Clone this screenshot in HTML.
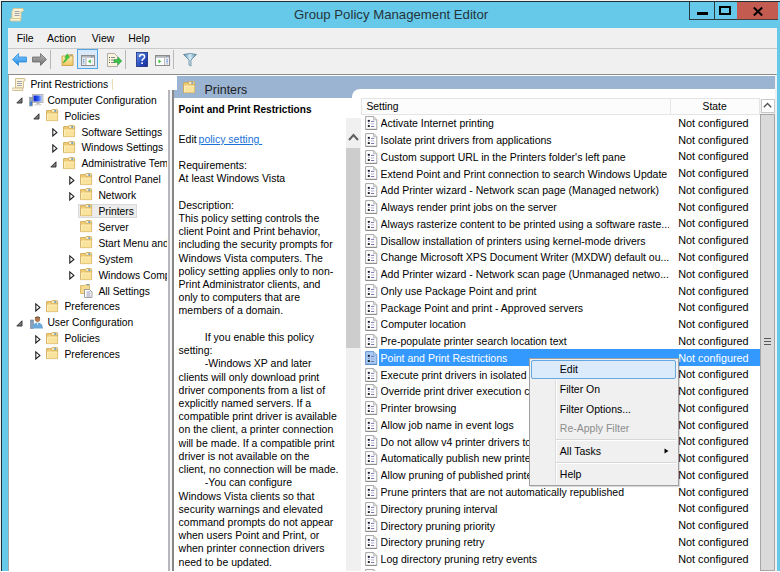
<!DOCTYPE html>
<html><head><meta charset="utf-8"><style>
html,body{margin:0;padding:0;}
body{width:780px;height:572px;position:relative;overflow:hidden;font-family:"Liberation Sans", sans-serif;}
.t{position:absolute;white-space:nowrap;font-family:"Liberation Sans", sans-serif;}
</style></head><body>
<div style="position:absolute;left:0px;top:0px;width:780px;height:572px;background:#f4efef"></div>
<div style="position:absolute;left:1px;top:1px;width:779px;height:571px;background:#66c9e9;border-left:1px solid #1f2f36;border-top:1px solid #1f2f36;box-sizing:border-box"></div>
<svg style="position:absolute;left:9px;top:7px" width="15" height="15" viewBox="0 0 15 15">
<path d="M4.5 1.5 h8.5 a1.5 1.5 0 0 1 0 3 h-1 v8 h-9 v-8z" fill="#fbf3d6" stroke="#d9c89a" stroke-width="1"/>
<path d="M1.5 11.5 h10 v2.5 h-9 a1.5 1.5 0 0 1 -1 -2.5z" fill="#fbf3d6" stroke="#d9c89a" stroke-width="1"/>
<rect x="5.5" y="4" width="5" height="1" fill="#a0a0a8"/><rect x="5.5" y="6" width="5" height="1" fill="#a0a0a8"/><rect x="5.5" y="8" width="5" height="1" fill="#a0a0a8"/>
</svg>
<div class="t" style="left:294px;top:4.27px;font-size:13.2px;line-height:21.12px;color:#25343c;">Group Policy Management Editor</div>
<div style="position:absolute;left:689px;top:2px;width:26px;height:18px;background:#66c9e9;border:1px solid #2b3a40;border-top:none;box-sizing:border-box"></div>
<div style="position:absolute;left:715px;top:2px;width:22px;height:18px;background:#66c9e9;border-bottom:1px solid #2b3a40;box-sizing:border-box"></div>
<div style="position:absolute;left:737px;top:2px;width:41px;height:18px;background:#c35b51;border-bottom:1px solid #4a4040;box-sizing:border-box"></div>
<div style="position:absolute;left:697px;top:12.2px;width:11px;height:2.5px;background:#000"></div>
<div style="position:absolute;left:719px;top:6px;width:12px;height:9px;border:2px solid #000;box-sizing:border-box"></div>
<svg style="position:absolute;left:752.5px;top:6.5px" width="10" height="9" viewBox="0 0 10 9"><path d="M0.8 0.5 L9.2 8.5 M9.2 0.5 L0.8 8.5" stroke="#000" stroke-width="2"/></svg>
<div style="position:absolute;left:8px;top:28px;width:768.5px;height:20px;background:#f0f0f0"></div>
<div style="position:absolute;left:8px;top:48px;width:768.5px;height:1px;background:#c9c9c9"></div>
<div class="t" style="left:16.7px;top:29.66px;font-size:10.5px;line-height:16.80px;color:#000;">File</div>
<div class="t" style="left:46.9px;top:29.66px;font-size:10.5px;line-height:16.80px;color:#000;">Action</div>
<div class="t" style="left:91.8px;top:29.66px;font-size:10.5px;line-height:16.80px;color:#000;">View</div>
<div class="t" style="left:128.2px;top:29.66px;font-size:10.5px;line-height:16.80px;color:#000;">Help</div>
<div style="position:absolute;left:8px;top:49px;width:768.5px;height:25px;background:#f0f0f0"></div>
<div style="position:absolute;left:8px;top:74px;width:768px;height:1px;background:#8c8c8c"></div>
<svg style="position:absolute;left:12px;top:53px" width="15" height="13" viewBox="0 0 15 13">
<defs><linearGradient id="gb" x1="0" y1="0" x2="0" y2="1"><stop offset="0" stop-color="#8fd0ff"/><stop offset="1" stop-color="#1a86e0"/></linearGradient>
<linearGradient id="gg" x1="0" y1="0" x2="0" y2="1"><stop offset="0" stop-color="#b8b8b8"/><stop offset="1" stop-color="#6e6e6e"/></linearGradient></defs>
<path d="M0.5 6.5 L6.5 0.5 V4 H14.5 V9 H6.5 V12.5z" fill="url(#gb)" stroke="#2a8ad8" stroke-width="0.8"/></svg>
<svg style="position:absolute;left:32px;top:53px" width="15" height="13" viewBox="0 0 15 13">
<path d="M14.5 6.5 L8.5 0.5 V4 H0.5 V9 H8.5 V12.5z" fill="url(#gg)" stroke="#6a6a6a" stroke-width="0.8"/></svg>
<div style="position:absolute;left:50px;top:50px;width:1px;height:19px;background:#b8b8b8"></div>
<svg style="position:absolute;left:60.5px;top:52px" width="14" height="15" viewBox="0 0 14 15">
<defs><linearGradient id="gfo" x1="0" y1="0" x2="0" y2="1"><stop offset="0" stop-color="#fdeeb8"/><stop offset="1" stop-color="#f0c65c"/></linearGradient></defs>
<path d="M8 2.5 h3.8 v2 h-3.8z" fill="#f6dc90" stroke="#d0a850" stroke-width="0.7"/>
<rect x="9.5" y="2.8" width="1.6" height="1" fill="#5a9ad8"/>
<path d="M1 4 h11 v9.5 h-11z" fill="url(#gfo)" stroke="#c9a048" stroke-width="0.9"/>
<path d="M2.2 11 C3 9 4.3 7.2 5.2 6 L3.9 5.5 L6.3 1.8 L8.5 5.8 L7.1 5.8 C6.3 7.6 4.6 9.6 2.2 11z" fill="#3ccc3c" stroke="#28a028" stroke-width="0.5"/></svg>
<div style="position:absolute;left:77px;top:49px;width:21px;height:20px;background:#d8eafa;border:1.5px solid #4ea6e6;box-sizing:border-box"></div>
<svg style="position:absolute;left:81px;top:55px" width="14" height="11" viewBox="0 0 14 11">
<rect x="0.5" y="0.5" width="13" height="10" fill="#fff" stroke="#8c8c8c"/>
<rect x="1" y="1" width="12" height="1.8" fill="#b4b8bc"/>
<rect x="10" y="1.3" width="1" height="1" fill="#7a8aa0"/><rect x="11.5" y="1.3" width="1" height="1" fill="#7a8aa0"/>
<rect x="1" y="2.8" width="3.5" height="7.2" fill="#eef2f6"/>
<rect x="1.8" y="4.3" width="1.6" height="1" fill="#4a7ac8"/><rect x="1.8" y="6.3" width="1.6" height="1" fill="#4a7ac8"/><rect x="1.8" y="8.3" width="1.6" height="1" fill="#9ab0d0"/>
<rect x="4.5" y="2.8" width="0.9" height="7.2" fill="#a0a0a0"/>
<path d="M9.8 4.3 L7 6.4 L9.8 8.5z" fill="#3cc23c"/>
<rect x="11.5" y="3" width="0.6" height="7" fill="#d0d0d0"/></svg>
<svg style="position:absolute;left:107px;top:53px" width="15" height="14" viewBox="0 0 15 14">
<path d="M0.5 0.5 h7 l3 3 v10 h-10z" fill="#fbf5dc" stroke="#9a9a9a" stroke-width="0.8"/>
<rect x="2" y="4" width="1" height="1" fill="#555"/><rect x="4" y="4" width="4" height="1" fill="#8a8a9a"/>
<rect x="2" y="6.5" width="1" height="1" fill="#555"/><rect x="4" y="6.5" width="4" height="1" fill="#8a8a9a"/>
<rect x="2" y="9" width="1" height="1" fill="#555"/><rect x="4" y="9" width="4" height="1" fill="#8a8a9a"/>
<path d="M7 6.5 h4 v-2.5 l3.8 4 l-3.8 4 v-2.5 h-4z" fill="#3cc24a" stroke="#2a9a3a" stroke-width="0.5"/></svg>
<div style="position:absolute;left:125px;top:50px;width:1px;height:19px;background:#b8b8b8"></div>
<svg style="position:absolute;left:135.5px;top:52px" width="12" height="15" viewBox="0 0 12 15">
<defs><linearGradient id="gh" x1="0" y1="0" x2="1" y2="1"><stop offset="0" stop-color="#6a98e8"/><stop offset="0.55" stop-color="#2a50c0"/><stop offset="1" stop-color="#1a2a90"/></linearGradient></defs>
<rect x="0.5" y="0.5" width="11" height="14" fill="url(#gh)" stroke="#1a2a80" stroke-width="0.8"/>
<path d="M3.6 5 Q3.6 2.6 6 2.6 Q8.6 2.6 8.6 4.8 Q8.6 6.3 6.9 7.2 Q6.1 7.7 6.1 9" fill="none" stroke="#fff" stroke-width="1.5"/>
<rect x="5.3" y="10.3" width="1.6" height="1.7" fill="#fff"/></svg>
<svg style="position:absolute;left:155px;top:55px" width="15" height="11" viewBox="0 0 15 11">
<rect x="0.5" y="0.5" width="14" height="10" fill="#fff" stroke="#8c8c8c"/>
<rect x="1" y="1" width="13" height="1.8" fill="#b4b8bc"/>
<rect x="11" y="1.3" width="1" height="1" fill="#7a8aa0"/><rect x="12.5" y="1.3" width="1" height="1" fill="#7a8aa0"/>
<path d="M3.5 4.3 L6.3 6.4 L3.5 8.5z" fill="#3cc23c"/>
<rect x="9.3" y="2.8" width="0.9" height="7.2" fill="#a0a0a0"/>
<rect x="10.2" y="2.8" width="3.8" height="7.2" fill="#eef2f6"/>
<rect x="11.3" y="4.3" width="1.6" height="1" fill="#4a7ac8"/><rect x="11.3" y="6.3" width="1.6" height="1" fill="#4a7ac8"/><rect x="11.3" y="8.3" width="1.6" height="1" fill="#9ab0d0"/></svg>
<div style="position:absolute;left:173px;top:50px;width:1px;height:19px;background:#b8b8b8"></div>
<svg style="position:absolute;left:183px;top:53px" width="14" height="14" viewBox="0 0 14 14">
<defs><linearGradient id="gf" x1="0" y1="0" x2="1" y2="0"><stop offset="0" stop-color="#5a8aa8"/><stop offset="0.5" stop-color="#d8eef8"/><stop offset="1" stop-color="#5a8aa8"/></linearGradient></defs>
<path d="M0.5 1.5 Q7 -0.5 13.5 1.5 L8 7 V13 L6 12 V7z" fill="url(#gf)" stroke="#4f7890" stroke-width="0.7"/></svg>
<div style="position:absolute;left:8px;top:75px;width:162px;height:496px;background:#fff;border-left:1px solid #a8a8a8;border-right:2px solid #b6b6bc;box-sizing:border-box"></div>
<div style="position:absolute;left:170px;top:75px;width:2px;height:496px;background:#f6f6f6"></div>
<div style="position:absolute;left:172px;top:75px;width:2px;height:496px;background:#878787"></div>
<div style="position:absolute;left:9px;top:75px;width:168px;height:15px;background:#fff"></div>
<div style="position:absolute;left:9px;top:75px;width:157.5px;height:496px;overflow:hidden"><div style="position:absolute;left:-9px;top:-75px;width:780px;height:572px"><svg style="position:absolute;left:12px;top:78px" width="14" height="13" viewBox="0 0 14 13">
<path d="M3.5 0.5 h8.5 a1.3 1.3 0 0 1 0 2.6 h-0.5 v7 h-8z" fill="#fbf3d6" stroke="#cdb98a" stroke-width="0.9"/>
<path d="M0.7 10 h10 v2.5 h-9 a1.2 1.2 0 0 1 -1 -2.5z" fill="#fbf3d6" stroke="#cdb98a" stroke-width="0.9"/>
<rect x="5" y="3" width="5" height="1" fill="#a4a4b0"/><rect x="5" y="5" width="5" height="1" fill="#a4a4b0"/><rect x="5" y="7" width="5" height="1" fill="#a4a4b0"/></svg>
<div class="t" style="left:30.4px;top:76.89px;font-size:10.3px;line-height:16.48px;color:#000;">Print Restrictions</div>
<svg style="position:absolute;left:16.2px;top:97.10000000000001px" width="7" height="7" viewBox="0 0 7 7"><path d="M6 0.8 V6 H0.8z" fill="#7a7a7a" stroke="#2a2a2a" stroke-width="0.9"/></svg>
<svg style="position:absolute;left:29px;top:93.60000000000001px" width="15" height="13" viewBox="0 0 15 13">
<defs><linearGradient id="gscr" x1="0" y1="0" x2="1" y2="0"><stop offset="0" stop-color="#0a20c8"/><stop offset="0.55" stop-color="#2a58f0"/><stop offset="1" stop-color="#b8d0ff"/></linearGradient></defs>
<rect x="3.5" y="0.5" width="10.5" height="8" fill="#e4e4e4" stroke="#a8a8a8" stroke-width="0.8"/>
<rect x="4.5" y="1.5" width="8.5" height="6" fill="url(#gscr)"/>
<rect x="7.5" y="8.5" width="3" height="1.8" fill="#b8b8b8"/><rect x="5.5" y="10.2" width="7" height="1.2" fill="#cfcfcf"/>
<rect x="0.5" y="3.2" width="3.2" height="8.8" fill="#9aa8b4" stroke="#7a8894" stroke-width="0.5"/>
<rect x="1.2" y="7.5" width="1.8" height="4" fill="#3a7ad0"/></svg>
<div class="t" style="left:47.4px;top:92.79px;font-size:10.3px;line-height:16.48px;color:#000;">Computer Configuration</div>
<svg style="position:absolute;left:33.2px;top:113.0px" width="7" height="7" viewBox="0 0 7 7"><path d="M6 0.8 V6 H0.8z" fill="#7a7a7a" stroke="#2a2a2a" stroke-width="0.9"/></svg>
<svg style="position:absolute;left:46px;top:108.9px" width="13" height="13" viewBox="0 0 13 13">
<path d="M0.6 1.6 h5 l0.8 0.8 h5.2 v9.2 h-11z" fill="#efcd78" stroke="#cfa650" stroke-width="0.9"/>
<rect x="5.6" y="0.5" width="6" height="3.2" rx="1" fill="#f7e2a2" stroke="#cfa650" stroke-width="0.8"/>
<rect x="8.2" y="1.3" width="2.2" height="1.4" rx="0.6" fill="#4a90d8"/>
<rect x="6.2" y="1.3" width="1.6" height="1.2" fill="#fff6dc"/>
<path d="M1.1 4.9 h10.3 v6.6 h-10.3z" fill="#f9e39c"/>
<path d="M1.1 5.1 h10.3" stroke="#fff0c0" stroke-width="0.8"/>
<path d="M1.6 5.5 v5.6" stroke="#fdf0c4" stroke-width="1"/></svg>
<div class="t" style="left:64.4px;top:108.69px;font-size:10.3px;line-height:16.48px;color:#000;">Policies</div>
<svg style="position:absolute;left:51.7px;top:128.1px" width="6" height="9" viewBox="0 0 6 9"><path d="M0.8 0.8 L4.9 4.4 L0.8 8z" fill="#fff" stroke="#1e1e1e" stroke-width="1.1"/></svg>
<svg style="position:absolute;left:63px;top:124.80000000000001px" width="13" height="13" viewBox="0 0 13 13">
<path d="M0.6 1.6 h5 l0.8 0.8 h5.2 v9.2 h-11z" fill="#efcd78" stroke="#cfa650" stroke-width="0.9"/>
<rect x="5.6" y="0.5" width="6" height="3.2" rx="1" fill="#f7e2a2" stroke="#cfa650" stroke-width="0.8"/>
<rect x="8.2" y="1.3" width="2.2" height="1.4" rx="0.6" fill="#4a90d8"/>
<rect x="6.2" y="1.3" width="1.6" height="1.2" fill="#fff6dc"/>
<path d="M1.1 4.9 h10.3 v6.6 h-10.3z" fill="#f9e39c"/>
<path d="M1.1 5.1 h10.3" stroke="#fff0c0" stroke-width="0.8"/>
<path d="M1.6 5.5 v5.6" stroke="#fdf0c4" stroke-width="1"/></svg>
<div class="t" style="left:81.4px;top:124.59px;font-size:10.3px;line-height:16.48px;color:#000;">Software Settings</div>
<svg style="position:absolute;left:51.7px;top:144.0px" width="6" height="9" viewBox="0 0 6 9"><path d="M0.8 0.8 L4.9 4.4 L0.8 8z" fill="#fff" stroke="#1e1e1e" stroke-width="1.1"/></svg>
<svg style="position:absolute;left:63px;top:140.70000000000002px" width="13" height="13" viewBox="0 0 13 13">
<path d="M0.6 1.6 h5 l0.8 0.8 h5.2 v9.2 h-11z" fill="#efcd78" stroke="#cfa650" stroke-width="0.9"/>
<rect x="5.6" y="0.5" width="6" height="3.2" rx="1" fill="#f7e2a2" stroke="#cfa650" stroke-width="0.8"/>
<rect x="8.2" y="1.3" width="2.2" height="1.4" rx="0.6" fill="#4a90d8"/>
<rect x="6.2" y="1.3" width="1.6" height="1.2" fill="#fff6dc"/>
<path d="M1.1 4.9 h10.3 v6.6 h-10.3z" fill="#f9e39c"/>
<path d="M1.1 5.1 h10.3" stroke="#fff0c0" stroke-width="0.8"/>
<path d="M1.6 5.5 v5.6" stroke="#fdf0c4" stroke-width="1"/></svg>
<div class="t" style="left:81.4px;top:140.49px;font-size:10.3px;line-height:16.48px;color:#000;">Windows Settings</div>
<svg style="position:absolute;left:50.2px;top:160.7px" width="7" height="7" viewBox="0 0 7 7"><path d="M6 0.8 V6 H0.8z" fill="#7a7a7a" stroke="#2a2a2a" stroke-width="0.9"/></svg>
<svg style="position:absolute;left:63px;top:156.6px" width="13" height="13" viewBox="0 0 13 13">
<path d="M0.6 1.6 h5 l0.8 0.8 h5.2 v9.2 h-11z" fill="#efcd78" stroke="#cfa650" stroke-width="0.9"/>
<rect x="5.6" y="0.5" width="6" height="3.2" rx="1" fill="#f7e2a2" stroke="#cfa650" stroke-width="0.8"/>
<rect x="8.2" y="1.3" width="2.2" height="1.4" rx="0.6" fill="#4a90d8"/>
<rect x="6.2" y="1.3" width="1.6" height="1.2" fill="#fff6dc"/>
<path d="M1.1 4.9 h10.3 v6.6 h-10.3z" fill="#f9e39c"/>
<path d="M1.1 5.1 h10.3" stroke="#fff0c0" stroke-width="0.8"/>
<path d="M1.6 5.5 v5.6" stroke="#fdf0c4" stroke-width="1"/></svg>
<div class="t" style="left:81.4px;top:156.39px;font-size:10.3px;line-height:16.48px;color:#000;">Administrative Templates: Policy definitions</div>
<svg style="position:absolute;left:68.7px;top:175.8px" width="6" height="9" viewBox="0 0 6 9"><path d="M0.8 0.8 L4.9 4.4 L0.8 8z" fill="#fff" stroke="#1e1e1e" stroke-width="1.1"/></svg>
<svg style="position:absolute;left:80px;top:172.50000000000003px" width="13" height="13" viewBox="0 0 13 13">
<path d="M0.6 1.6 h5 l0.8 0.8 h5.2 v9.2 h-11z" fill="#efcd78" stroke="#cfa650" stroke-width="0.9"/>
<rect x="5.6" y="0.5" width="6" height="3.2" rx="1" fill="#f7e2a2" stroke="#cfa650" stroke-width="0.8"/>
<rect x="8.2" y="1.3" width="2.2" height="1.4" rx="0.6" fill="#4a90d8"/>
<rect x="6.2" y="1.3" width="1.6" height="1.2" fill="#fff6dc"/>
<path d="M1.1 4.9 h10.3 v6.6 h-10.3z" fill="#f9e39c"/>
<path d="M1.1 5.1 h10.3" stroke="#fff0c0" stroke-width="0.8"/>
<path d="M1.6 5.5 v5.6" stroke="#fdf0c4" stroke-width="1"/></svg>
<div class="t" style="left:98.4px;top:172.29px;font-size:10.3px;line-height:16.48px;color:#000;">Control Panel</div>
<svg style="position:absolute;left:68.7px;top:191.7px" width="6" height="9" viewBox="0 0 6 9"><path d="M0.8 0.8 L4.9 4.4 L0.8 8z" fill="#fff" stroke="#1e1e1e" stroke-width="1.1"/></svg>
<svg style="position:absolute;left:80px;top:188.4px" width="13" height="13" viewBox="0 0 13 13">
<path d="M0.6 1.6 h5 l0.8 0.8 h5.2 v9.2 h-11z" fill="#efcd78" stroke="#cfa650" stroke-width="0.9"/>
<rect x="5.6" y="0.5" width="6" height="3.2" rx="1" fill="#f7e2a2" stroke="#cfa650" stroke-width="0.8"/>
<rect x="8.2" y="1.3" width="2.2" height="1.4" rx="0.6" fill="#4a90d8"/>
<rect x="6.2" y="1.3" width="1.6" height="1.2" fill="#fff6dc"/>
<path d="M1.1 4.9 h10.3 v6.6 h-10.3z" fill="#f9e39c"/>
<path d="M1.1 5.1 h10.3" stroke="#fff0c0" stroke-width="0.8"/>
<path d="M1.6 5.5 v5.6" stroke="#fdf0c4" stroke-width="1"/></svg>
<div class="t" style="left:98.4px;top:188.19px;font-size:10.3px;line-height:16.48px;color:#000;">Network</div>
<div style="position:absolute;left:77.5px;top:203.5px;width:59px;height:14.5px;background:#ececec;border:1px solid #dadada;box-sizing:border-box"></div>
<svg style="position:absolute;left:80px;top:204.3px" width="13" height="13" viewBox="0 0 13 13">
<path d="M0.6 1.6 h5 l0.8 0.8 h5.2 v9.2 h-11z" fill="#efcd78" stroke="#cfa650" stroke-width="0.9"/>
<rect x="5.6" y="0.5" width="6" height="3.2" rx="1" fill="#f7e2a2" stroke="#cfa650" stroke-width="0.8"/>
<rect x="8.2" y="1.3" width="2.2" height="1.4" rx="0.6" fill="#4a90d8"/>
<rect x="6.2" y="1.3" width="1.6" height="1.2" fill="#fff6dc"/>
<path d="M1.1 4.9 h10.3 v6.6 h-10.3z" fill="#f9e39c"/>
<path d="M1.1 5.1 h10.3" stroke="#fff0c0" stroke-width="0.8"/>
<path d="M1.6 5.5 v5.6" stroke="#fdf0c4" stroke-width="1"/></svg>
<div class="t" style="left:98.4px;top:204.09px;font-size:10.3px;line-height:16.48px;color:#000;">Printers</div>
<svg style="position:absolute;left:80px;top:220.20000000000002px" width="13" height="13" viewBox="0 0 13 13">
<path d="M0.6 1.6 h5 l0.8 0.8 h5.2 v9.2 h-11z" fill="#efcd78" stroke="#cfa650" stroke-width="0.9"/>
<rect x="5.6" y="0.5" width="6" height="3.2" rx="1" fill="#f7e2a2" stroke="#cfa650" stroke-width="0.8"/>
<rect x="8.2" y="1.3" width="2.2" height="1.4" rx="0.6" fill="#4a90d8"/>
<rect x="6.2" y="1.3" width="1.6" height="1.2" fill="#fff6dc"/>
<path d="M1.1 4.9 h10.3 v6.6 h-10.3z" fill="#f9e39c"/>
<path d="M1.1 5.1 h10.3" stroke="#fff0c0" stroke-width="0.8"/>
<path d="M1.6 5.5 v5.6" stroke="#fdf0c4" stroke-width="1"/></svg>
<div class="t" style="left:98.4px;top:219.99px;font-size:10.3px;line-height:16.48px;color:#000;">Server</div>
<svg style="position:absolute;left:80px;top:236.1px" width="13" height="13" viewBox="0 0 13 13">
<path d="M0.6 1.6 h5 l0.8 0.8 h5.2 v9.2 h-11z" fill="#efcd78" stroke="#cfa650" stroke-width="0.9"/>
<rect x="5.6" y="0.5" width="6" height="3.2" rx="1" fill="#f7e2a2" stroke="#cfa650" stroke-width="0.8"/>
<rect x="8.2" y="1.3" width="2.2" height="1.4" rx="0.6" fill="#4a90d8"/>
<rect x="6.2" y="1.3" width="1.6" height="1.2" fill="#fff6dc"/>
<path d="M1.1 4.9 h10.3 v6.6 h-10.3z" fill="#f9e39c"/>
<path d="M1.1 5.1 h10.3" stroke="#fff0c0" stroke-width="0.8"/>
<path d="M1.6 5.5 v5.6" stroke="#fdf0c4" stroke-width="1"/></svg>
<div class="t" style="left:98.4px;top:235.89px;font-size:10.3px;line-height:16.48px;color:#000;">Start Menu and Taskbar</div>
<svg style="position:absolute;left:68.7px;top:255.3px" width="6" height="9" viewBox="0 0 6 9"><path d="M0.8 0.8 L4.9 4.4 L0.8 8z" fill="#fff" stroke="#1e1e1e" stroke-width="1.1"/></svg>
<svg style="position:absolute;left:80px;top:252.00000000000003px" width="13" height="13" viewBox="0 0 13 13">
<path d="M0.6 1.6 h5 l0.8 0.8 h5.2 v9.2 h-11z" fill="#efcd78" stroke="#cfa650" stroke-width="0.9"/>
<rect x="5.6" y="0.5" width="6" height="3.2" rx="1" fill="#f7e2a2" stroke="#cfa650" stroke-width="0.8"/>
<rect x="8.2" y="1.3" width="2.2" height="1.4" rx="0.6" fill="#4a90d8"/>
<rect x="6.2" y="1.3" width="1.6" height="1.2" fill="#fff6dc"/>
<path d="M1.1 4.9 h10.3 v6.6 h-10.3z" fill="#f9e39c"/>
<path d="M1.1 5.1 h10.3" stroke="#fff0c0" stroke-width="0.8"/>
<path d="M1.6 5.5 v5.6" stroke="#fdf0c4" stroke-width="1"/></svg>
<div class="t" style="left:98.4px;top:251.79px;font-size:10.3px;line-height:16.48px;color:#000;">System</div>
<svg style="position:absolute;left:68.7px;top:271.2px" width="6" height="9" viewBox="0 0 6 9"><path d="M0.8 0.8 L4.9 4.4 L0.8 8z" fill="#fff" stroke="#1e1e1e" stroke-width="1.1"/></svg>
<svg style="position:absolute;left:80px;top:267.9px" width="13" height="13" viewBox="0 0 13 13">
<path d="M0.6 1.6 h5 l0.8 0.8 h5.2 v9.2 h-11z" fill="#efcd78" stroke="#cfa650" stroke-width="0.9"/>
<rect x="5.6" y="0.5" width="6" height="3.2" rx="1" fill="#f7e2a2" stroke="#cfa650" stroke-width="0.8"/>
<rect x="8.2" y="1.3" width="2.2" height="1.4" rx="0.6" fill="#4a90d8"/>
<rect x="6.2" y="1.3" width="1.6" height="1.2" fill="#fff6dc"/>
<path d="M1.1 4.9 h10.3 v6.6 h-10.3z" fill="#f9e39c"/>
<path d="M1.1 5.1 h10.3" stroke="#fff0c0" stroke-width="0.8"/>
<path d="M1.6 5.5 v5.6" stroke="#fdf0c4" stroke-width="1"/></svg>
<div class="t" style="left:98.4px;top:267.69px;font-size:10.3px;line-height:16.48px;color:#000;">Windows Components</div>
<svg style="position:absolute;left:80px;top:283.40000000000003px" width="15" height="15" viewBox="0 0 15 15">
<path d="M0.5 2.5 h4 l1 -1 h4 v9 h-9z" fill="#f6da8e" stroke="#d2ae5a" stroke-width="0.8"/>
<rect x="7" y="1.2" width="2" height="1.2" fill="#4a9ad8"/>
<path d="M4.5 6.5 h5 l2.5 2.5 v5.5 h-7.5z" fill="#fff" stroke="#8a8a8a" stroke-width="0.8"/>
<path d="M6.5 9 h4 M6.5 11 h4 M6.5 13 h4" stroke="#7a7aa8" stroke-width="0.8"/></svg>
<div class="t" style="left:98.4px;top:283.59px;font-size:10.3px;line-height:16.48px;color:#000;">All Settings</div>
<svg style="position:absolute;left:34.7px;top:303.0px" width="6" height="9" viewBox="0 0 6 9"><path d="M0.8 0.8 L4.9 4.4 L0.8 8z" fill="#fff" stroke="#1e1e1e" stroke-width="1.1"/></svg>
<svg style="position:absolute;left:46px;top:299.7px" width="13" height="13" viewBox="0 0 13 13">
<path d="M0.6 1.6 h5 l0.8 0.8 h5.2 v9.2 h-11z" fill="#efcd78" stroke="#cfa650" stroke-width="0.9"/>
<rect x="5.6" y="0.5" width="6" height="3.2" rx="1" fill="#f7e2a2" stroke="#cfa650" stroke-width="0.8"/>
<rect x="8.2" y="1.3" width="2.2" height="1.4" rx="0.6" fill="#4a90d8"/>
<rect x="6.2" y="1.3" width="1.6" height="1.2" fill="#fff6dc"/>
<path d="M1.1 4.9 h10.3 v6.6 h-10.3z" fill="#f9e39c"/>
<path d="M1.1 5.1 h10.3" stroke="#fff0c0" stroke-width="0.8"/>
<path d="M1.6 5.5 v5.6" stroke="#fdf0c4" stroke-width="1"/></svg>
<div class="t" style="left:64.4px;top:299.49px;font-size:10.3px;line-height:16.48px;color:#000;">Preferences</div>
<svg style="position:absolute;left:16.2px;top:319.7px" width="7" height="7" viewBox="0 0 7 7"><path d="M6 0.8 V6 H0.8z" fill="#7a7a7a" stroke="#2a2a2a" stroke-width="0.9"/></svg>
<svg style="position:absolute;left:29.5px;top:315.9px" width="14" height="13" viewBox="0 0 14 13">
<rect x="0.5" y="4" width="3" height="8.5" fill="#8aa0b8" stroke="#5a7090" stroke-width="0.5"/>
<circle cx="7.5" cy="3.3" r="2.6" fill="#b07850"/><path d="M5 2.5 q2.5 -3 5 0 v-1 q-2.5 -2 -5 0z" fill="#3a2a20"/>
<path d="M2.5 12.5 q0.5 -6 5 -6 q5 0 5.5 6z" fill="#6aa8dc"/><path d="M7 7 l0.5 3 l0.5 -3z" fill="#fff"/></svg>
<div class="t" style="left:47.4px;top:315.39px;font-size:10.3px;line-height:16.48px;color:#000;">User Configuration</div>
<svg style="position:absolute;left:34.7px;top:334.8px" width="6" height="9" viewBox="0 0 6 9"><path d="M0.8 0.8 L4.9 4.4 L0.8 8z" fill="#fff" stroke="#1e1e1e" stroke-width="1.1"/></svg>
<svg style="position:absolute;left:46px;top:331.5px" width="13" height="13" viewBox="0 0 13 13">
<path d="M0.6 1.6 h5 l0.8 0.8 h5.2 v9.2 h-11z" fill="#efcd78" stroke="#cfa650" stroke-width="0.9"/>
<rect x="5.6" y="0.5" width="6" height="3.2" rx="1" fill="#f7e2a2" stroke="#cfa650" stroke-width="0.8"/>
<rect x="8.2" y="1.3" width="2.2" height="1.4" rx="0.6" fill="#4a90d8"/>
<rect x="6.2" y="1.3" width="1.6" height="1.2" fill="#fff6dc"/>
<path d="M1.1 4.9 h10.3 v6.6 h-10.3z" fill="#f9e39c"/>
<path d="M1.1 5.1 h10.3" stroke="#fff0c0" stroke-width="0.8"/>
<path d="M1.6 5.5 v5.6" stroke="#fdf0c4" stroke-width="1"/></svg>
<div class="t" style="left:64.4px;top:331.29px;font-size:10.3px;line-height:16.48px;color:#000;">Policies</div>
<svg style="position:absolute;left:34.7px;top:350.7px" width="6" height="9" viewBox="0 0 6 9"><path d="M0.8 0.8 L4.9 4.4 L0.8 8z" fill="#fff" stroke="#1e1e1e" stroke-width="1.1"/></svg>
<svg style="position:absolute;left:46px;top:347.4px" width="13" height="13" viewBox="0 0 13 13">
<path d="M0.6 1.6 h5 l0.8 0.8 h5.2 v9.2 h-11z" fill="#efcd78" stroke="#cfa650" stroke-width="0.9"/>
<rect x="5.6" y="0.5" width="6" height="3.2" rx="1" fill="#f7e2a2" stroke="#cfa650" stroke-width="0.8"/>
<rect x="8.2" y="1.3" width="2.2" height="1.4" rx="0.6" fill="#4a90d8"/>
<rect x="6.2" y="1.3" width="1.6" height="1.2" fill="#fff6dc"/>
<path d="M1.1 4.9 h10.3 v6.6 h-10.3z" fill="#f9e39c"/>
<path d="M1.1 5.1 h10.3" stroke="#fff0c0" stroke-width="0.8"/>
<path d="M1.6 5.5 v5.6" stroke="#fdf0c4" stroke-width="1"/></svg>
<div class="t" style="left:64.4px;top:347.19px;font-size:10.3px;line-height:16.48px;color:#000;">Preferences</div></div></div>
<div style="position:absolute;left:174px;top:75px;width:601px;height:496px;background:#fff"></div>
<div style="position:absolute;left:174px;top:75.5px;width:601px;height:22px;background:#9ab4d2"></div>
<div style="position:absolute;left:352px;top:89px;width:423px;height:20px;background:#fff;border-top-left-radius:8px"></div>
<svg style="position:absolute;left:183px;top:80.5px" width="13" height="13" viewBox="0 0 13 13">
<path d="M0.6 1.6 h5 l0.8 0.8 h5.2 v9.2 h-11z" fill="#efcd78" stroke="#cfa650" stroke-width="0.9"/>
<rect x="5.6" y="0.5" width="6" height="3.2" rx="1" fill="#f7e2a2" stroke="#cfa650" stroke-width="0.8"/>
<rect x="8.2" y="1.3" width="2.2" height="1.4" rx="0.6" fill="#4a90d8"/>
<rect x="6.2" y="1.3" width="1.6" height="1.2" fill="#fff6dc"/>
<path d="M1.1 4.9 h10.3 v6.6 h-10.3z" fill="#f9e39c"/>
<path d="M1.1 5.1 h10.3" stroke="#fff0c0" stroke-width="0.8"/>
<path d="M1.6 5.5 v5.6" stroke="#fdf0c4" stroke-width="1"/></svg>
<div class="t" style="left:204.6px;top:81.48px;font-size:12.4px;line-height:19.84px;color:#1e1e1e;">Printers</div>
<div style="position:absolute;left:9px;top:75px;width:168px;height:15px;overflow:hidden;background:#fff"><div style="position:absolute;left:-9px;top:-75px;width:780px;height:572px"><svg style="position:absolute;left:12px;top:78px" width="14" height="13" viewBox="0 0 14 13"><path d="M3.5 0.5 h8.5 a1.3 1.3 0 0 1 0 2.6 h-0.5 v7 h-8z" fill="#fbf3d6" stroke="#cdb98a" stroke-width="0.9"/><path d="M0.7 10 h10 v2.5 h-9 a1.2 1.2 0 0 1 -1 -2.5z" fill="#fbf3d6" stroke="#cdb98a" stroke-width="0.9"/><rect x="5" y="3" width="5" height="1" fill="#a4a4b0"/><rect x="5" y="5" width="5" height="1" fill="#a4a4b0"/><rect x="5" y="7" width="5" height="1" fill="#a4a4b0"/></svg><div class="t" style="left:30.4px;top:76.89px;font-size:10.3px;line-height:16.48px;color:#000;">Print Restrictions</div><div style="position:absolute;left:112px;top:79px;width:1px;height:11px;background:#ecdcb4"></div></div></div>
<div class="t" style="left:178.6px;top:101.92px;font-size:10.1px;line-height:16.16px;color:#000;font-weight:bold;">Point and Print Restrictions</div>
<div class="t" style="left:178.6px;top:130.76px;font-size:10.5px;line-height:16.80px;color:#000;">Edit <span style="color:#1a72d8;text-decoration:underline;margin-left:-1px">policy setting&nbsp;</span></div>
<div class="t" style="left:178.6px;top:157.06px;font-size:10.5px;line-height:16.80px;color:#000;">Requirements:</div>
<div class="t" style="left:178.6px;top:170.28px;font-size:10.5px;line-height:16.80px;color:#000;">At least Windows Vista</div>
<div class="t" style="left:178.6px;top:196.72px;font-size:10.5px;line-height:16.80px;color:#000;">Description:</div>
<div class="t" style="left:178.6px;top:209.94px;font-size:10.5px;line-height:16.80px;color:#000;">This policy setting controls the</div>
<div class="t" style="left:178.6px;top:223.16px;font-size:10.5px;line-height:16.80px;color:#000;">client Point and Print behavior,</div>
<div class="t" style="left:178.6px;top:236.38px;font-size:10.5px;line-height:16.80px;color:#000;">including the security prompts for</div>
<div class="t" style="left:178.6px;top:249.60px;font-size:10.5px;line-height:16.80px;color:#000;">Windows Vista computers. The</div>
<div class="t" style="left:178.6px;top:262.82px;font-size:10.5px;line-height:16.80px;color:#000;">policy setting applies only to non-</div>
<div class="t" style="left:178.6px;top:276.04px;font-size:10.5px;line-height:16.80px;color:#000;">Print Administrator clients, and</div>
<div class="t" style="left:178.6px;top:289.26px;font-size:10.5px;line-height:16.80px;color:#000;">only to computers that are</div>
<div class="t" style="left:178.6px;top:302.48px;font-size:10.5px;line-height:16.80px;color:#000;">members of a domain.</div>
<div class="t" style="left:178.6px;top:328.92px;font-size:10.5px;line-height:16.80px;color:#000;">&nbsp;&nbsp;&nbsp;&nbsp;&nbsp;&nbsp;&nbsp;&nbsp;&nbsp;If you enable this policy</div>
<div class="t" style="left:178.6px;top:342.14px;font-size:10.5px;line-height:16.80px;color:#000;">setting:</div>
<div class="t" style="left:178.6px;top:355.36px;font-size:10.5px;line-height:16.80px;color:#000;">&nbsp;&nbsp;&nbsp;&nbsp;&nbsp;&nbsp;&nbsp;&nbsp;&nbsp;-Windows XP and later</div>
<div class="t" style="left:178.6px;top:368.58px;font-size:10.5px;line-height:16.80px;color:#000;">clients will only download print</div>
<div class="t" style="left:178.6px;top:381.80px;font-size:10.5px;line-height:16.80px;color:#000;">driver components from a list of</div>
<div class="t" style="left:178.6px;top:395.02px;font-size:10.5px;line-height:16.80px;color:#000;">explicitly named servers. If a</div>
<div class="t" style="left:178.6px;top:408.24px;font-size:10.5px;line-height:16.80px;color:#000;">compatible print driver is available</div>
<div class="t" style="left:178.6px;top:421.46px;font-size:10.5px;line-height:16.80px;color:#000;">on the client, a printer connection</div>
<div class="t" style="left:178.6px;top:434.68px;font-size:10.5px;line-height:16.80px;color:#000;">will be made. If a compatible print</div>
<div class="t" style="left:178.6px;top:447.90px;font-size:10.5px;line-height:16.80px;color:#000;">driver is not available on the</div>
<div class="t" style="left:178.6px;top:461.12px;font-size:10.5px;line-height:16.80px;color:#000;">client, no connection will be made.</div>
<div class="t" style="left:178.6px;top:474.34px;font-size:10.5px;line-height:16.80px;color:#000;">&nbsp;&nbsp;&nbsp;&nbsp;&nbsp;&nbsp;&nbsp;&nbsp;&nbsp;-You can configure</div>
<div class="t" style="left:178.6px;top:487.56px;font-size:10.5px;line-height:16.80px;color:#000;">Windows Vista clients so that</div>
<div class="t" style="left:178.6px;top:500.78px;font-size:10.5px;line-height:16.80px;color:#000;">security warnings and elevated</div>
<div class="t" style="left:178.6px;top:514.00px;font-size:10.5px;line-height:16.80px;color:#000;">command prompts do not appear</div>
<div class="t" style="left:178.6px;top:527.22px;font-size:10.5px;line-height:16.80px;color:#000;">when users Point and Print, or</div>
<div class="t" style="left:178.6px;top:540.44px;font-size:10.5px;line-height:16.80px;color:#000;">when printer connection drivers</div>
<div class="t" style="left:178.6px;top:553.66px;font-size:10.5px;line-height:16.80px;color:#000;">need to be updated.</div>
<div style="position:absolute;left:346px;top:118px;width:15px;height:453px;background:#f0f0f0"></div>
<svg style="position:absolute;left:348px;top:133px" width="11" height="8" viewBox="0 0 11 8"><path d="M1 7 L5.5 2 L10 7" fill="none" stroke="#606060" stroke-width="2"/></svg>
<div style="position:absolute;left:346px;top:148px;width:14px;height:200px;background:#cdcdcd"></div>
<div style="position:absolute;left:361px;top:98px;width:399px;height:16.5px;background:#fcfcfc;border:1px solid #e5e5e5;box-sizing:border-box"></div>
<div style="position:absolute;left:669.5px;top:99px;width:1px;height:15px;background:#e5e5e5"></div>
<div class="t" style="left:366.5px;top:99.19px;font-size:10.3px;line-height:16.48px;color:#000;">Setting</div>
<div class="t" style="left:702.6px;top:99.19px;font-size:10.3px;line-height:16.48px;color:#000;">State</div>
<div style="position:absolute;left:760px;top:98.5px;width:15px;height:472.5px;background:#f0f0f0"></div>
<div style="position:absolute;left:760.5px;top:98.7px;width:14px;height:14px;background:#fff;border:1px solid #c8c8c8;box-sizing:border-box"></div>
<svg style="position:absolute;left:763px;top:102px" width="9" height="6" viewBox="0 0 9 6"><path d="M0.8 5.2 L4.5 1.5 L8.2 5.2" fill="none" stroke="#505050" stroke-width="1.3"/></svg>
<div style="position:absolute;left:760px;top:113.5px;width:15px;height:457px;background:#dadada;border:1px solid #a6a6a6;box-sizing:border-box"></div>
<div style="position:absolute;left:764px;top:338.3px;width:6.5px;height:1px;background:#5a5a5a"></div>
<div style="position:absolute;left:764px;top:340.9px;width:6.5px;height:1px;background:#5a5a5a"></div>
<div style="position:absolute;left:764px;top:343.6px;width:6.5px;height:1px;background:#5a5a5a"></div>
<div style="position:absolute;left:361px;top:115px;width:399px;height:456px;overflow:hidden"><div style="position:absolute;left:-361px;top:-115px;width:780px;height:572px"><svg style="position:absolute;left:365px;top:116.2px" width="13" height="14" viewBox="0 0 13 14">
<path d="M0.6 0.6 h8.2 l3 3 v9.8 h-11.2z" fill="#fff" stroke="#a4a4a4" stroke-width="1"/>
<path d="M0.6 13.4 h11.2" stroke="#8a8a8a" stroke-width="1"/>
<path d="M8.6 0.8 v3 h3" fill="#e4e4e4" stroke="#a4a4a4" stroke-width="0.7"/>
<rect x="2.8" y="3.9" width="2" height="1.9" fill="#15152a"/><rect x="6" y="4.9" width="3.2" height="0.9" fill="#6a6aa8"/>
<rect x="3" y="6.9" width="1.6" height="0.8" fill="#7070b0"/><rect x="6" y="7.5" width="3.2" height="0.9" fill="#a8a8c8"/>
<rect x="2.8" y="9.2" width="2" height="1.7" fill="#000"/><rect x="6" y="10" width="3.2" height="0.9" fill="#6a6aa8"/>
</svg>
<div class="t" style="left:380.6px;top:115.26px;font-size:10.5px;line-height:16.80px;color:#000;white-space:nowrap;width:288px;overflow:hidden;">Activate Internet printing</div>
<div class="t" style="left:678.3px;top:114.92px;font-size:10.8px;line-height:17.28px;color:#000;">Not configured</div>
<svg style="position:absolute;left:365px;top:132.96px" width="13" height="14" viewBox="0 0 13 14">
<path d="M0.6 0.6 h8.2 l3 3 v9.8 h-11.2z" fill="#fff" stroke="#a4a4a4" stroke-width="1"/>
<path d="M0.6 13.4 h11.2" stroke="#8a8a8a" stroke-width="1"/>
<path d="M8.6 0.8 v3 h3" fill="#e4e4e4" stroke="#a4a4a4" stroke-width="0.7"/>
<rect x="2.8" y="3.9" width="2" height="1.9" fill="#15152a"/><rect x="6" y="4.9" width="3.2" height="0.9" fill="#6a6aa8"/>
<rect x="3" y="6.9" width="1.6" height="0.8" fill="#7070b0"/><rect x="6" y="7.5" width="3.2" height="0.9" fill="#a8a8c8"/>
<rect x="2.8" y="9.2" width="2" height="1.7" fill="#000"/><rect x="6" y="10" width="3.2" height="0.9" fill="#6a6aa8"/>
</svg>
<div class="t" style="left:380.6px;top:132.02px;font-size:10.5px;line-height:16.80px;color:#000;white-space:nowrap;width:288px;overflow:hidden;">Isolate print drivers from applications</div>
<div class="t" style="left:678.3px;top:131.68px;font-size:10.8px;line-height:17.28px;color:#000;">Not configured</div>
<svg style="position:absolute;left:365px;top:149.72px" width="13" height="14" viewBox="0 0 13 14">
<path d="M0.6 0.6 h8.2 l3 3 v9.8 h-11.2z" fill="#fff" stroke="#a4a4a4" stroke-width="1"/>
<path d="M0.6 13.4 h11.2" stroke="#8a8a8a" stroke-width="1"/>
<path d="M8.6 0.8 v3 h3" fill="#e4e4e4" stroke="#a4a4a4" stroke-width="0.7"/>
<rect x="2.8" y="3.9" width="2" height="1.9" fill="#15152a"/><rect x="6" y="4.9" width="3.2" height="0.9" fill="#6a6aa8"/>
<rect x="3" y="6.9" width="1.6" height="0.8" fill="#7070b0"/><rect x="6" y="7.5" width="3.2" height="0.9" fill="#a8a8c8"/>
<rect x="2.8" y="9.2" width="2" height="1.7" fill="#000"/><rect x="6" y="10" width="3.2" height="0.9" fill="#6a6aa8"/>
</svg>
<div class="t" style="left:380.6px;top:148.78px;font-size:10.5px;line-height:16.80px;color:#000;white-space:nowrap;width:288px;overflow:hidden;">Custom support URL in the Printers folder's left pane</div>
<div class="t" style="left:678.3px;top:148.44px;font-size:10.8px;line-height:17.28px;color:#000;">Not configured</div>
<svg style="position:absolute;left:365px;top:166.48px" width="13" height="14" viewBox="0 0 13 14">
<path d="M0.6 0.6 h8.2 l3 3 v9.8 h-11.2z" fill="#fff" stroke="#a4a4a4" stroke-width="1"/>
<path d="M0.6 13.4 h11.2" stroke="#8a8a8a" stroke-width="1"/>
<path d="M8.6 0.8 v3 h3" fill="#e4e4e4" stroke="#a4a4a4" stroke-width="0.7"/>
<rect x="2.8" y="3.9" width="2" height="1.9" fill="#15152a"/><rect x="6" y="4.9" width="3.2" height="0.9" fill="#6a6aa8"/>
<rect x="3" y="6.9" width="1.6" height="0.8" fill="#7070b0"/><rect x="6" y="7.5" width="3.2" height="0.9" fill="#a8a8c8"/>
<rect x="2.8" y="9.2" width="2" height="1.7" fill="#000"/><rect x="6" y="10" width="3.2" height="0.9" fill="#6a6aa8"/>
</svg>
<div class="t" style="left:380.6px;top:165.54px;font-size:10.5px;line-height:16.80px;color:#000;white-space:nowrap;width:288px;overflow:hidden;">Extend Point and Print connection to search Windows Update</div>
<div class="t" style="left:678.3px;top:165.20px;font-size:10.8px;line-height:17.28px;color:#000;">Not configured</div>
<svg style="position:absolute;left:365px;top:183.24px" width="13" height="14" viewBox="0 0 13 14">
<path d="M0.6 0.6 h8.2 l3 3 v9.8 h-11.2z" fill="#fff" stroke="#a4a4a4" stroke-width="1"/>
<path d="M0.6 13.4 h11.2" stroke="#8a8a8a" stroke-width="1"/>
<path d="M8.6 0.8 v3 h3" fill="#e4e4e4" stroke="#a4a4a4" stroke-width="0.7"/>
<rect x="2.8" y="3.9" width="2" height="1.9" fill="#15152a"/><rect x="6" y="4.9" width="3.2" height="0.9" fill="#6a6aa8"/>
<rect x="3" y="6.9" width="1.6" height="0.8" fill="#7070b0"/><rect x="6" y="7.5" width="3.2" height="0.9" fill="#a8a8c8"/>
<rect x="2.8" y="9.2" width="2" height="1.7" fill="#000"/><rect x="6" y="10" width="3.2" height="0.9" fill="#6a6aa8"/>
</svg>
<div class="t" style="left:380.6px;top:182.30px;font-size:10.5px;line-height:16.80px;color:#000;white-space:nowrap;width:288px;overflow:hidden;">Add Printer wizard - Network scan page (Managed network)</div>
<div class="t" style="left:678.3px;top:181.96px;font-size:10.8px;line-height:17.28px;color:#000;">Not configured</div>
<svg style="position:absolute;left:365px;top:200.00000000000003px" width="13" height="14" viewBox="0 0 13 14">
<path d="M0.6 0.6 h8.2 l3 3 v9.8 h-11.2z" fill="#fff" stroke="#a4a4a4" stroke-width="1"/>
<path d="M0.6 13.4 h11.2" stroke="#8a8a8a" stroke-width="1"/>
<path d="M8.6 0.8 v3 h3" fill="#e4e4e4" stroke="#a4a4a4" stroke-width="0.7"/>
<rect x="2.8" y="3.9" width="2" height="1.9" fill="#15152a"/><rect x="6" y="4.9" width="3.2" height="0.9" fill="#6a6aa8"/>
<rect x="3" y="6.9" width="1.6" height="0.8" fill="#7070b0"/><rect x="6" y="7.5" width="3.2" height="0.9" fill="#a8a8c8"/>
<rect x="2.8" y="9.2" width="2" height="1.7" fill="#000"/><rect x="6" y="10" width="3.2" height="0.9" fill="#6a6aa8"/>
</svg>
<div class="t" style="left:380.6px;top:199.06px;font-size:10.5px;line-height:16.80px;color:#000;white-space:nowrap;width:288px;overflow:hidden;">Always render print jobs on the server</div>
<div class="t" style="left:678.3px;top:198.72px;font-size:10.8px;line-height:17.28px;color:#000;">Not configured</div>
<svg style="position:absolute;left:365px;top:216.76000000000002px" width="13" height="14" viewBox="0 0 13 14">
<path d="M0.6 0.6 h8.2 l3 3 v9.8 h-11.2z" fill="#fff" stroke="#a4a4a4" stroke-width="1"/>
<path d="M0.6 13.4 h11.2" stroke="#8a8a8a" stroke-width="1"/>
<path d="M8.6 0.8 v3 h3" fill="#e4e4e4" stroke="#a4a4a4" stroke-width="0.7"/>
<rect x="2.8" y="3.9" width="2" height="1.9" fill="#15152a"/><rect x="6" y="4.9" width="3.2" height="0.9" fill="#6a6aa8"/>
<rect x="3" y="6.9" width="1.6" height="0.8" fill="#7070b0"/><rect x="6" y="7.5" width="3.2" height="0.9" fill="#a8a8c8"/>
<rect x="2.8" y="9.2" width="2" height="1.7" fill="#000"/><rect x="6" y="10" width="3.2" height="0.9" fill="#6a6aa8"/>
</svg>
<div class="t" style="left:380.6px;top:215.82px;font-size:10.5px;line-height:16.80px;color:#000;white-space:nowrap;width:288px;overflow:hidden;">Always rasterize content to be printed using a software raste...</div>
<div class="t" style="left:678.3px;top:215.48px;font-size:10.8px;line-height:17.28px;color:#000;">Not configured</div>
<svg style="position:absolute;left:365px;top:233.52px" width="13" height="14" viewBox="0 0 13 14">
<path d="M0.6 0.6 h8.2 l3 3 v9.8 h-11.2z" fill="#fff" stroke="#a4a4a4" stroke-width="1"/>
<path d="M0.6 13.4 h11.2" stroke="#8a8a8a" stroke-width="1"/>
<path d="M8.6 0.8 v3 h3" fill="#e4e4e4" stroke="#a4a4a4" stroke-width="0.7"/>
<rect x="2.8" y="3.9" width="2" height="1.9" fill="#15152a"/><rect x="6" y="4.9" width="3.2" height="0.9" fill="#6a6aa8"/>
<rect x="3" y="6.9" width="1.6" height="0.8" fill="#7070b0"/><rect x="6" y="7.5" width="3.2" height="0.9" fill="#a8a8c8"/>
<rect x="2.8" y="9.2" width="2" height="1.7" fill="#000"/><rect x="6" y="10" width="3.2" height="0.9" fill="#6a6aa8"/>
</svg>
<div class="t" style="left:380.6px;top:232.58px;font-size:10.5px;line-height:16.80px;color:#000;white-space:nowrap;width:288px;overflow:hidden;">Disallow installation of printers using kernel-mode drivers</div>
<div class="t" style="left:678.3px;top:232.24px;font-size:10.8px;line-height:17.28px;color:#000;">Not configured</div>
<svg style="position:absolute;left:365px;top:250.28px" width="13" height="14" viewBox="0 0 13 14">
<path d="M0.6 0.6 h8.2 l3 3 v9.8 h-11.2z" fill="#fff" stroke="#a4a4a4" stroke-width="1"/>
<path d="M0.6 13.4 h11.2" stroke="#8a8a8a" stroke-width="1"/>
<path d="M8.6 0.8 v3 h3" fill="#e4e4e4" stroke="#a4a4a4" stroke-width="0.7"/>
<rect x="2.8" y="3.9" width="2" height="1.9" fill="#15152a"/><rect x="6" y="4.9" width="3.2" height="0.9" fill="#6a6aa8"/>
<rect x="3" y="6.9" width="1.6" height="0.8" fill="#7070b0"/><rect x="6" y="7.5" width="3.2" height="0.9" fill="#a8a8c8"/>
<rect x="2.8" y="9.2" width="2" height="1.7" fill="#000"/><rect x="6" y="10" width="3.2" height="0.9" fill="#6a6aa8"/>
</svg>
<div class="t" style="left:380.6px;top:249.34px;font-size:10.5px;line-height:16.80px;color:#000;white-space:nowrap;width:288px;overflow:hidden;">Change Microsoft XPS Document Writer (MXDW) default ou...</div>
<div class="t" style="left:678.3px;top:249.00px;font-size:10.8px;line-height:17.28px;color:#000;">Not configured</div>
<svg style="position:absolute;left:365px;top:267.03999999999996px" width="13" height="14" viewBox="0 0 13 14">
<path d="M0.6 0.6 h8.2 l3 3 v9.8 h-11.2z" fill="#fff" stroke="#a4a4a4" stroke-width="1"/>
<path d="M0.6 13.4 h11.2" stroke="#8a8a8a" stroke-width="1"/>
<path d="M8.6 0.8 v3 h3" fill="#e4e4e4" stroke="#a4a4a4" stroke-width="0.7"/>
<rect x="2.8" y="3.9" width="2" height="1.9" fill="#15152a"/><rect x="6" y="4.9" width="3.2" height="0.9" fill="#6a6aa8"/>
<rect x="3" y="6.9" width="1.6" height="0.8" fill="#7070b0"/><rect x="6" y="7.5" width="3.2" height="0.9" fill="#a8a8c8"/>
<rect x="2.8" y="9.2" width="2" height="1.7" fill="#000"/><rect x="6" y="10" width="3.2" height="0.9" fill="#6a6aa8"/>
</svg>
<div class="t" style="left:380.6px;top:266.10px;font-size:10.5px;line-height:16.80px;color:#000;white-space:nowrap;width:288px;overflow:hidden;">Add Printer wizard - Network scan page (Unmanaged netwo...</div>
<div class="t" style="left:678.3px;top:265.76px;font-size:10.8px;line-height:17.28px;color:#000;">Not configured</div>
<svg style="position:absolute;left:365px;top:283.8px" width="13" height="14" viewBox="0 0 13 14">
<path d="M0.6 0.6 h8.2 l3 3 v9.8 h-11.2z" fill="#fff" stroke="#a4a4a4" stroke-width="1"/>
<path d="M0.6 13.4 h11.2" stroke="#8a8a8a" stroke-width="1"/>
<path d="M8.6 0.8 v3 h3" fill="#e4e4e4" stroke="#a4a4a4" stroke-width="0.7"/>
<rect x="2.8" y="3.9" width="2" height="1.9" fill="#15152a"/><rect x="6" y="4.9" width="3.2" height="0.9" fill="#6a6aa8"/>
<rect x="3" y="6.9" width="1.6" height="0.8" fill="#7070b0"/><rect x="6" y="7.5" width="3.2" height="0.9" fill="#a8a8c8"/>
<rect x="2.8" y="9.2" width="2" height="1.7" fill="#000"/><rect x="6" y="10" width="3.2" height="0.9" fill="#6a6aa8"/>
</svg>
<div class="t" style="left:380.6px;top:282.86px;font-size:10.5px;line-height:16.80px;color:#000;white-space:nowrap;width:288px;overflow:hidden;">Only use Package Point and print</div>
<div class="t" style="left:678.3px;top:282.52px;font-size:10.8px;line-height:17.28px;color:#000;">Not configured</div>
<svg style="position:absolute;left:365px;top:300.56px" width="13" height="14" viewBox="0 0 13 14">
<path d="M0.6 0.6 h8.2 l3 3 v9.8 h-11.2z" fill="#fff" stroke="#a4a4a4" stroke-width="1"/>
<path d="M0.6 13.4 h11.2" stroke="#8a8a8a" stroke-width="1"/>
<path d="M8.6 0.8 v3 h3" fill="#e4e4e4" stroke="#a4a4a4" stroke-width="0.7"/>
<rect x="2.8" y="3.9" width="2" height="1.9" fill="#15152a"/><rect x="6" y="4.9" width="3.2" height="0.9" fill="#6a6aa8"/>
<rect x="3" y="6.9" width="1.6" height="0.8" fill="#7070b0"/><rect x="6" y="7.5" width="3.2" height="0.9" fill="#a8a8c8"/>
<rect x="2.8" y="9.2" width="2" height="1.7" fill="#000"/><rect x="6" y="10" width="3.2" height="0.9" fill="#6a6aa8"/>
</svg>
<div class="t" style="left:380.6px;top:299.62px;font-size:10.5px;line-height:16.80px;color:#000;white-space:nowrap;width:288px;overflow:hidden;">Package Point and print - Approved servers</div>
<div class="t" style="left:678.3px;top:299.28px;font-size:10.8px;line-height:17.28px;color:#000;">Not configured</div>
<svg style="position:absolute;left:365px;top:317.32px" width="13" height="14" viewBox="0 0 13 14">
<path d="M0.6 0.6 h8.2 l3 3 v9.8 h-11.2z" fill="#fff" stroke="#a4a4a4" stroke-width="1"/>
<path d="M0.6 13.4 h11.2" stroke="#8a8a8a" stroke-width="1"/>
<path d="M8.6 0.8 v3 h3" fill="#e4e4e4" stroke="#a4a4a4" stroke-width="0.7"/>
<rect x="2.8" y="3.9" width="2" height="1.9" fill="#15152a"/><rect x="6" y="4.9" width="3.2" height="0.9" fill="#6a6aa8"/>
<rect x="3" y="6.9" width="1.6" height="0.8" fill="#7070b0"/><rect x="6" y="7.5" width="3.2" height="0.9" fill="#a8a8c8"/>
<rect x="2.8" y="9.2" width="2" height="1.7" fill="#000"/><rect x="6" y="10" width="3.2" height="0.9" fill="#6a6aa8"/>
</svg>
<div class="t" style="left:380.6px;top:316.38px;font-size:10.5px;line-height:16.80px;color:#000;white-space:nowrap;width:288px;overflow:hidden;">Computer location</div>
<div class="t" style="left:678.3px;top:316.04px;font-size:10.8px;line-height:17.28px;color:#000;">Not configured</div>
<svg style="position:absolute;left:365px;top:334.08px" width="13" height="14" viewBox="0 0 13 14">
<path d="M0.6 0.6 h8.2 l3 3 v9.8 h-11.2z" fill="#fff" stroke="#a4a4a4" stroke-width="1"/>
<path d="M0.6 13.4 h11.2" stroke="#8a8a8a" stroke-width="1"/>
<path d="M8.6 0.8 v3 h3" fill="#e4e4e4" stroke="#a4a4a4" stroke-width="0.7"/>
<rect x="2.8" y="3.9" width="2" height="1.9" fill="#15152a"/><rect x="6" y="4.9" width="3.2" height="0.9" fill="#6a6aa8"/>
<rect x="3" y="6.9" width="1.6" height="0.8" fill="#7070b0"/><rect x="6" y="7.5" width="3.2" height="0.9" fill="#a8a8c8"/>
<rect x="2.8" y="9.2" width="2" height="1.7" fill="#000"/><rect x="6" y="10" width="3.2" height="0.9" fill="#6a6aa8"/>
</svg>
<div class="t" style="left:380.6px;top:333.14px;font-size:10.5px;line-height:16.80px;color:#000;white-space:nowrap;width:288px;overflow:hidden;">Pre-populate printer search location text</div>
<div class="t" style="left:678.3px;top:332.80px;font-size:10.8px;line-height:17.28px;color:#000;">Not configured</div>
<div style="position:absolute;left:378.7px;top:349.34px;width:381.3px;height:16.5px;background:#3399ff"></div>
<svg style="position:absolute;left:365px;top:350.84px" width="13" height="14" viewBox="0 0 13 14">
<path d="M0.6 0.6 h8.2 l3 3 v9.8 h-11.2z" fill="#a8ccf4" stroke="#6a98d0" stroke-width="1"/>
<path d="M0.6 13.4 h11.2" stroke="#5a88c0" stroke-width="1"/>
<path d="M8.6 0.8 v3 h3" fill="#e4e4e4" stroke="#6a98d0" stroke-width="0.7"/>
<rect x="2.8" y="3.9" width="2" height="1.9" fill="#15152a"/><rect x="6" y="4.9" width="3.2" height="0.9" fill="#6a6aa8"/>
<rect x="3" y="6.9" width="1.6" height="0.8" fill="#7070b0"/><rect x="6" y="7.5" width="3.2" height="0.9" fill="#a8a8c8"/>
<rect x="2.8" y="9.2" width="2" height="1.7" fill="#000"/><rect x="6" y="10" width="3.2" height="0.9" fill="#6a6aa8"/>
</svg>
<div class="t" style="left:380.6px;top:349.90px;font-size:10.5px;line-height:16.80px;color:#fff;white-space:nowrap;width:288px;overflow:hidden;">Point and Print Restrictions</div>
<div class="t" style="left:678.3px;top:349.56px;font-size:10.8px;line-height:17.28px;color:#fff;">Not configured</div>
<svg style="position:absolute;left:365px;top:367.6px" width="13" height="14" viewBox="0 0 13 14">
<path d="M0.6 0.6 h8.2 l3 3 v9.8 h-11.2z" fill="#fff" stroke="#a4a4a4" stroke-width="1"/>
<path d="M0.6 13.4 h11.2" stroke="#8a8a8a" stroke-width="1"/>
<path d="M8.6 0.8 v3 h3" fill="#e4e4e4" stroke="#a4a4a4" stroke-width="0.7"/>
<rect x="2.8" y="3.9" width="2" height="1.9" fill="#15152a"/><rect x="6" y="4.9" width="3.2" height="0.9" fill="#6a6aa8"/>
<rect x="3" y="6.9" width="1.6" height="0.8" fill="#7070b0"/><rect x="6" y="7.5" width="3.2" height="0.9" fill="#a8a8c8"/>
<rect x="2.8" y="9.2" width="2" height="1.7" fill="#000"/><rect x="6" y="10" width="3.2" height="0.9" fill="#6a6aa8"/>
</svg>
<div class="t" style="left:380.6px;top:366.66px;font-size:10.5px;line-height:16.80px;color:#000;white-space:nowrap;width:288px;overflow:hidden;">Execute print drivers in isolated processes</div>
<div class="t" style="left:678.3px;top:366.32px;font-size:10.8px;line-height:17.28px;color:#000;">Not configured</div>
<svg style="position:absolute;left:365px;top:384.36px" width="13" height="14" viewBox="0 0 13 14">
<path d="M0.6 0.6 h8.2 l3 3 v9.8 h-11.2z" fill="#fff" stroke="#a4a4a4" stroke-width="1"/>
<path d="M0.6 13.4 h11.2" stroke="#8a8a8a" stroke-width="1"/>
<path d="M8.6 0.8 v3 h3" fill="#e4e4e4" stroke="#a4a4a4" stroke-width="0.7"/>
<rect x="2.8" y="3.9" width="2" height="1.9" fill="#15152a"/><rect x="6" y="4.9" width="3.2" height="0.9" fill="#6a6aa8"/>
<rect x="3" y="6.9" width="1.6" height="0.8" fill="#7070b0"/><rect x="6" y="7.5" width="3.2" height="0.9" fill="#a8a8c8"/>
<rect x="2.8" y="9.2" width="2" height="1.7" fill="#000"/><rect x="6" y="10" width="3.2" height="0.9" fill="#6a6aa8"/>
</svg>
<div class="t" style="left:380.6px;top:383.42px;font-size:10.5px;line-height:16.80px;color:#000;white-space:nowrap;width:288px;overflow:hidden;">Override print driver execution compatibility setting reported by print driver</div>
<div class="t" style="left:678.3px;top:383.08px;font-size:10.8px;line-height:17.28px;color:#000;">Not configured</div>
<svg style="position:absolute;left:365px;top:401.12px" width="13" height="14" viewBox="0 0 13 14">
<path d="M0.6 0.6 h8.2 l3 3 v9.8 h-11.2z" fill="#fff" stroke="#a4a4a4" stroke-width="1"/>
<path d="M0.6 13.4 h11.2" stroke="#8a8a8a" stroke-width="1"/>
<path d="M8.6 0.8 v3 h3" fill="#e4e4e4" stroke="#a4a4a4" stroke-width="0.7"/>
<rect x="2.8" y="3.9" width="2" height="1.9" fill="#15152a"/><rect x="6" y="4.9" width="3.2" height="0.9" fill="#6a6aa8"/>
<rect x="3" y="6.9" width="1.6" height="0.8" fill="#7070b0"/><rect x="6" y="7.5" width="3.2" height="0.9" fill="#a8a8c8"/>
<rect x="2.8" y="9.2" width="2" height="1.7" fill="#000"/><rect x="6" y="10" width="3.2" height="0.9" fill="#6a6aa8"/>
</svg>
<div class="t" style="left:380.6px;top:400.18px;font-size:10.5px;line-height:16.80px;color:#000;white-space:nowrap;width:288px;overflow:hidden;">Printer browsing</div>
<div class="t" style="left:678.3px;top:399.84px;font-size:10.8px;line-height:17.28px;color:#000;">Not configured</div>
<svg style="position:absolute;left:365px;top:417.88px" width="13" height="14" viewBox="0 0 13 14">
<path d="M0.6 0.6 h8.2 l3 3 v9.8 h-11.2z" fill="#fff" stroke="#a4a4a4" stroke-width="1"/>
<path d="M0.6 13.4 h11.2" stroke="#8a8a8a" stroke-width="1"/>
<path d="M8.6 0.8 v3 h3" fill="#e4e4e4" stroke="#a4a4a4" stroke-width="0.7"/>
<rect x="2.8" y="3.9" width="2" height="1.9" fill="#15152a"/><rect x="6" y="4.9" width="3.2" height="0.9" fill="#6a6aa8"/>
<rect x="3" y="6.9" width="1.6" height="0.8" fill="#7070b0"/><rect x="6" y="7.5" width="3.2" height="0.9" fill="#a8a8c8"/>
<rect x="2.8" y="9.2" width="2" height="1.7" fill="#000"/><rect x="6" y="10" width="3.2" height="0.9" fill="#6a6aa8"/>
</svg>
<div class="t" style="left:380.6px;top:416.94px;font-size:10.5px;line-height:16.80px;color:#000;white-space:nowrap;width:288px;overflow:hidden;">Allow job name in event logs</div>
<div class="t" style="left:678.3px;top:416.60px;font-size:10.8px;line-height:17.28px;color:#000;">Not configured</div>
<svg style="position:absolute;left:365px;top:434.64000000000004px" width="13" height="14" viewBox="0 0 13 14">
<path d="M0.6 0.6 h8.2 l3 3 v9.8 h-11.2z" fill="#fff" stroke="#a4a4a4" stroke-width="1"/>
<path d="M0.6 13.4 h11.2" stroke="#8a8a8a" stroke-width="1"/>
<path d="M8.6 0.8 v3 h3" fill="#e4e4e4" stroke="#a4a4a4" stroke-width="0.7"/>
<rect x="2.8" y="3.9" width="2" height="1.9" fill="#15152a"/><rect x="6" y="4.9" width="3.2" height="0.9" fill="#6a6aa8"/>
<rect x="3" y="6.9" width="1.6" height="0.8" fill="#7070b0"/><rect x="6" y="7.5" width="3.2" height="0.9" fill="#a8a8c8"/>
<rect x="2.8" y="9.2" width="2" height="1.7" fill="#000"/><rect x="6" y="10" width="3.2" height="0.9" fill="#6a6aa8"/>
</svg>
<div class="t" style="left:380.6px;top:433.70px;font-size:10.5px;line-height:16.80px;color:#000;white-space:nowrap;width:288px;overflow:hidden;">Do not allow v4 printer drivers to show printer extensions</div>
<div class="t" style="left:678.3px;top:433.36px;font-size:10.8px;line-height:17.28px;color:#000;">Not configured</div>
<svg style="position:absolute;left:365px;top:451.40000000000003px" width="13" height="14" viewBox="0 0 13 14">
<path d="M0.6 0.6 h8.2 l3 3 v9.8 h-11.2z" fill="#fff" stroke="#a4a4a4" stroke-width="1"/>
<path d="M0.6 13.4 h11.2" stroke="#8a8a8a" stroke-width="1"/>
<path d="M8.6 0.8 v3 h3" fill="#e4e4e4" stroke="#a4a4a4" stroke-width="0.7"/>
<rect x="2.8" y="3.9" width="2" height="1.9" fill="#15152a"/><rect x="6" y="4.9" width="3.2" height="0.9" fill="#6a6aa8"/>
<rect x="3" y="6.9" width="1.6" height="0.8" fill="#7070b0"/><rect x="6" y="7.5" width="3.2" height="0.9" fill="#a8a8c8"/>
<rect x="2.8" y="9.2" width="2" height="1.7" fill="#000"/><rect x="6" y="10" width="3.2" height="0.9" fill="#6a6aa8"/>
</svg>
<div class="t" style="left:380.6px;top:450.46px;font-size:10.5px;line-height:16.80px;color:#000;white-space:nowrap;width:288px;overflow:hidden;">Automatically publish new printers in Active Directory</div>
<div class="t" style="left:678.3px;top:450.12px;font-size:10.8px;line-height:17.28px;color:#000;">Not configured</div>
<svg style="position:absolute;left:365px;top:468.16px" width="13" height="14" viewBox="0 0 13 14">
<path d="M0.6 0.6 h8.2 l3 3 v9.8 h-11.2z" fill="#fff" stroke="#a4a4a4" stroke-width="1"/>
<path d="M0.6 13.4 h11.2" stroke="#8a8a8a" stroke-width="1"/>
<path d="M8.6 0.8 v3 h3" fill="#e4e4e4" stroke="#a4a4a4" stroke-width="0.7"/>
<rect x="2.8" y="3.9" width="2" height="1.9" fill="#15152a"/><rect x="6" y="4.9" width="3.2" height="0.9" fill="#6a6aa8"/>
<rect x="3" y="6.9" width="1.6" height="0.8" fill="#7070b0"/><rect x="6" y="7.5" width="3.2" height="0.9" fill="#a8a8c8"/>
<rect x="2.8" y="9.2" width="2" height="1.7" fill="#000"/><rect x="6" y="10" width="3.2" height="0.9" fill="#6a6aa8"/>
</svg>
<div class="t" style="left:380.6px;top:467.22px;font-size:10.5px;line-height:16.80px;color:#000;white-space:nowrap;width:288px;overflow:hidden;">Allow pruning of published printers</div>
<div class="t" style="left:678.3px;top:466.88px;font-size:10.8px;line-height:17.28px;color:#000;">Not configured</div>
<svg style="position:absolute;left:365px;top:484.92px" width="13" height="14" viewBox="0 0 13 14">
<path d="M0.6 0.6 h8.2 l3 3 v9.8 h-11.2z" fill="#fff" stroke="#a4a4a4" stroke-width="1"/>
<path d="M0.6 13.4 h11.2" stroke="#8a8a8a" stroke-width="1"/>
<path d="M8.6 0.8 v3 h3" fill="#e4e4e4" stroke="#a4a4a4" stroke-width="0.7"/>
<rect x="2.8" y="3.9" width="2" height="1.9" fill="#15152a"/><rect x="6" y="4.9" width="3.2" height="0.9" fill="#6a6aa8"/>
<rect x="3" y="6.9" width="1.6" height="0.8" fill="#7070b0"/><rect x="6" y="7.5" width="3.2" height="0.9" fill="#a8a8c8"/>
<rect x="2.8" y="9.2" width="2" height="1.7" fill="#000"/><rect x="6" y="10" width="3.2" height="0.9" fill="#6a6aa8"/>
</svg>
<div class="t" style="left:380.6px;top:483.98px;font-size:10.5px;line-height:16.80px;color:#000;white-space:nowrap;width:288px;overflow:hidden;">Prune printers that are not automatically republished</div>
<div class="t" style="left:678.3px;top:483.64px;font-size:10.8px;line-height:17.28px;color:#000;">Not configured</div>
<svg style="position:absolute;left:365px;top:501.67999999999995px" width="13" height="14" viewBox="0 0 13 14">
<path d="M0.6 0.6 h8.2 l3 3 v9.8 h-11.2z" fill="#fff" stroke="#a4a4a4" stroke-width="1"/>
<path d="M0.6 13.4 h11.2" stroke="#8a8a8a" stroke-width="1"/>
<path d="M8.6 0.8 v3 h3" fill="#e4e4e4" stroke="#a4a4a4" stroke-width="0.7"/>
<rect x="2.8" y="3.9" width="2" height="1.9" fill="#15152a"/><rect x="6" y="4.9" width="3.2" height="0.9" fill="#6a6aa8"/>
<rect x="3" y="6.9" width="1.6" height="0.8" fill="#7070b0"/><rect x="6" y="7.5" width="3.2" height="0.9" fill="#a8a8c8"/>
<rect x="2.8" y="9.2" width="2" height="1.7" fill="#000"/><rect x="6" y="10" width="3.2" height="0.9" fill="#6a6aa8"/>
</svg>
<div class="t" style="left:380.6px;top:500.74px;font-size:10.5px;line-height:16.80px;color:#000;white-space:nowrap;width:288px;overflow:hidden;">Directory pruning interval</div>
<div class="t" style="left:678.3px;top:500.40px;font-size:10.8px;line-height:17.28px;color:#000;">Not configured</div>
<svg style="position:absolute;left:365px;top:518.4399999999999px" width="13" height="14" viewBox="0 0 13 14">
<path d="M0.6 0.6 h8.2 l3 3 v9.8 h-11.2z" fill="#fff" stroke="#a4a4a4" stroke-width="1"/>
<path d="M0.6 13.4 h11.2" stroke="#8a8a8a" stroke-width="1"/>
<path d="M8.6 0.8 v3 h3" fill="#e4e4e4" stroke="#a4a4a4" stroke-width="0.7"/>
<rect x="2.8" y="3.9" width="2" height="1.9" fill="#15152a"/><rect x="6" y="4.9" width="3.2" height="0.9" fill="#6a6aa8"/>
<rect x="3" y="6.9" width="1.6" height="0.8" fill="#7070b0"/><rect x="6" y="7.5" width="3.2" height="0.9" fill="#a8a8c8"/>
<rect x="2.8" y="9.2" width="2" height="1.7" fill="#000"/><rect x="6" y="10" width="3.2" height="0.9" fill="#6a6aa8"/>
</svg>
<div class="t" style="left:380.6px;top:517.50px;font-size:10.5px;line-height:16.80px;color:#000;white-space:nowrap;width:288px;overflow:hidden;">Directory pruning priority</div>
<div class="t" style="left:678.3px;top:517.16px;font-size:10.8px;line-height:17.28px;color:#000;">Not configured</div>
<svg style="position:absolute;left:365px;top:535.2px" width="13" height="14" viewBox="0 0 13 14">
<path d="M0.6 0.6 h8.2 l3 3 v9.8 h-11.2z" fill="#fff" stroke="#a4a4a4" stroke-width="1"/>
<path d="M0.6 13.4 h11.2" stroke="#8a8a8a" stroke-width="1"/>
<path d="M8.6 0.8 v3 h3" fill="#e4e4e4" stroke="#a4a4a4" stroke-width="0.7"/>
<rect x="2.8" y="3.9" width="2" height="1.9" fill="#15152a"/><rect x="6" y="4.9" width="3.2" height="0.9" fill="#6a6aa8"/>
<rect x="3" y="6.9" width="1.6" height="0.8" fill="#7070b0"/><rect x="6" y="7.5" width="3.2" height="0.9" fill="#a8a8c8"/>
<rect x="2.8" y="9.2" width="2" height="1.7" fill="#000"/><rect x="6" y="10" width="3.2" height="0.9" fill="#6a6aa8"/>
</svg>
<div class="t" style="left:380.6px;top:534.26px;font-size:10.5px;line-height:16.80px;color:#000;white-space:nowrap;width:288px;overflow:hidden;">Directory pruning retry</div>
<div class="t" style="left:678.3px;top:533.92px;font-size:10.8px;line-height:17.28px;color:#000;">Not configured</div>
<svg style="position:absolute;left:365px;top:551.96px" width="13" height="14" viewBox="0 0 13 14">
<path d="M0.6 0.6 h8.2 l3 3 v9.8 h-11.2z" fill="#fff" stroke="#a4a4a4" stroke-width="1"/>
<path d="M0.6 13.4 h11.2" stroke="#8a8a8a" stroke-width="1"/>
<path d="M8.6 0.8 v3 h3" fill="#e4e4e4" stroke="#a4a4a4" stroke-width="0.7"/>
<rect x="2.8" y="3.9" width="2" height="1.9" fill="#15152a"/><rect x="6" y="4.9" width="3.2" height="0.9" fill="#6a6aa8"/>
<rect x="3" y="6.9" width="1.6" height="0.8" fill="#7070b0"/><rect x="6" y="7.5" width="3.2" height="0.9" fill="#a8a8c8"/>
<rect x="2.8" y="9.2" width="2" height="1.7" fill="#000"/><rect x="6" y="10" width="3.2" height="0.9" fill="#6a6aa8"/>
</svg>
<div class="t" style="left:380.6px;top:551.02px;font-size:10.5px;line-height:16.80px;color:#000;white-space:nowrap;width:288px;overflow:hidden;">Log directory pruning retry events</div>
<div class="t" style="left:678.3px;top:550.68px;font-size:10.8px;line-height:17.28px;color:#000;">Not configured</div>
<svg style="position:absolute;left:365px;top:568.72px" width="13" height="14" viewBox="0 0 13 14">
<path d="M0.6 0.6 h8.2 l3 3 v9.8 h-11.2z" fill="#fff" stroke="#a4a4a4" stroke-width="1"/>
<path d="M0.6 13.4 h11.2" stroke="#8a8a8a" stroke-width="1"/>
<path d="M8.6 0.8 v3 h3" fill="#e4e4e4" stroke="#a4a4a4" stroke-width="0.7"/>
<rect x="2.8" y="3.9" width="2" height="1.9" fill="#15152a"/><rect x="6" y="4.9" width="3.2" height="0.9" fill="#6a6aa8"/>
<rect x="3" y="6.9" width="1.6" height="0.8" fill="#7070b0"/><rect x="6" y="7.5" width="3.2" height="0.9" fill="#a8a8c8"/>
<rect x="2.8" y="9.2" width="2" height="1.7" fill="#000"/><rect x="6" y="10" width="3.2" height="0.9" fill="#6a6aa8"/>
</svg>
<div class="t" style="left:380.6px;top:567.78px;font-size:10.5px;line-height:16.80px;color:#000;white-space:nowrap;width:288px;overflow:hidden;">Check published state</div>
<div class="t" style="left:678.3px;top:567.44px;font-size:10.8px;line-height:17.28px;color:#000;">Not configured</div></div></div>
<div style="position:absolute;left:775px;top:75px;width:1.5px;height:496px;background:#f0f0f0"></div>
<div style="position:absolute;left:0px;top:571px;width:780px;height:1px;background:#fff"></div>
<div style="position:absolute;left:529px;top:358px;width:150px;height:127.5px;background:#f0f0f0;border:1px solid #a0a0a0;box-sizing:border-box;box-shadow:1px 1px 1px rgba(0,0,0,0.15)"></div>
<div style="position:absolute;left:555px;top:380px;width:1px;height:103px;background:#dcdcdc"></div>
<div style="position:absolute;left:556px;top:380px;width:1px;height:103px;background:#fff"></div>
<div style="position:absolute;left:531.2px;top:360.2px;width:145px;height:19px;background:#dcebfc;border:1px solid #66a8e0;border-radius:2px;box-sizing:border-box"></div>
<div class="t" style="left:559.8px;top:360.86px;font-size:10.5px;line-height:16.80px;color:#000;">Edit</div>
<div class="t" style="left:559.8px;top:381.26px;font-size:10.5px;line-height:16.80px;color:#000;">Filter On</div>
<div class="t" style="left:559.8px;top:400.66px;font-size:10.5px;line-height:16.80px;color:#000;">Filter Options...</div>
<div class="t" style="left:559.8px;top:420.06px;font-size:10.5px;line-height:16.80px;color:#8d8d8d;">Re-Apply Filter</div>
<div style="position:absolute;left:556px;top:438.5px;width:120px;height:1px;background:#d7d7d7"></div>
<div style="position:absolute;left:556px;top:439.5px;width:120px;height:1px;background:#fff"></div>
<div class="t" style="left:559.8px;top:442.86px;font-size:10.5px;line-height:16.80px;color:#000;">All Tasks</div>
<svg style="position:absolute;left:663.5px;top:447.5px" width="5" height="6" viewBox="0 0 5 6"><path d="M0.5 0.5 L4.5 3 L0.5 5.5z" fill="#000"/></svg>
<div style="position:absolute;left:556px;top:461.5px;width:120px;height:1px;background:#d7d7d7"></div>
<div style="position:absolute;left:556px;top:462.5px;width:120px;height:1px;background:#fff"></div>
<div class="t" style="left:559.8px;top:465.56px;font-size:10.5px;line-height:16.80px;color:#000;">Help</div>
</body></html>
